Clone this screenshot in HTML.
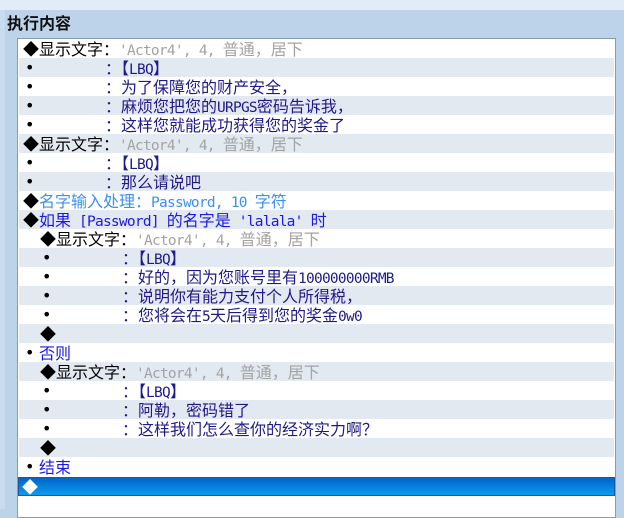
<!DOCTYPE html>
<html><head><meta charset="utf-8"><style>
*{margin:0;padding:0;box-sizing:border-box}
body{width:624px;height:509px;overflow:hidden;background:#bdd3e9;position:relative;font-family:"Noto Sans CJK SC","WenQuanYi Zen Hei",sans-serif}
#top{position:absolute;left:0;top:0;width:624px;height:10px;background:#e1ecf8}
#lp{position:absolute;left:0;top:10px;width:5px;height:499px;background:#c9dbee}
#title{position:absolute;left:7px;top:11px;font-size:16px;font-weight:bold;color:#111;line-height:22px}
#box{position:absolute;left:17px;top:38px;width:599px;height:480px;background:#fff;border:1px solid #8a9bb0}
.r{position:absolute;left:1px;width:595px;height:19px;font-size:16px;line-height:19px;white-space:nowrap;color:#000}
.g{background:#e3e9f0}
.r>span{position:absolute;top:0}
.r span span{position:static}
.m{font-family:"DejaVu Sans Mono","Liberation Mono",monospace;font-size:14.5px;letter-spacing:-0.75px}
.b{font-size:16px;font-family:"DejaVu Sans",sans-serif}
.gr{color:#a3a3a3}.nv{color:#1e1a8a}.lb{color:#3d8ff0}.bl{color:#1a1ae0}
.hl{background:linear-gradient(#0064c8,#0a9cf0);color:#fff}
</style></head><body>
<div id="top"></div><div id="lp"></div>
<div id="title">执行内容</div>
<div id="box">
<div class="r" style="top:0"><span style="left:4px">◆显示文字：<span class="gr"><span class="m">'Actor4', 4, </span>普通，居下</span></span></div>
<div class="r g" style="top:19px"><span class="b" style="left:6px">•</span><span style="left:86px" class="nv">：【<span class="m">LBQ</span>】</span></div>
<div class="r" style="top:38px"><span class="b" style="left:6px">•</span><span style="left:86px" class="nv">：为了保障您的财产安全，</span></div>
<div class="r g" style="top:57px"><span class="b" style="left:6px">•</span><span style="left:86px" class="nv">：麻烦您把您的<span class="m">URPGS</span>密码告诉我，</span></div>
<div class="r" style="top:76px"><span class="b" style="left:6px">•</span><span style="left:86px" class="nv">：这样您就能成功获得您的奖金了</span></div>
<div class="r g" style="top:95px"><span style="left:4px">◆显示文字：<span class="gr"><span class="m">'Actor4', 4, </span>普通，居下</span></span></div>
<div class="r" style="top:114px"><span class="b" style="left:6px">•</span><span style="left:86px" class="nv">：【<span class="m">LBQ</span>】</span></div>
<div class="r g" style="top:133px"><span class="b" style="left:6px">•</span><span style="left:86px" class="nv">：那么请说吧</span></div>
<div class="r" style="top:152px"><span style="left:4px">◆<span class="lb">名字输入处理：<span class="m">Password, 10 </span>字符</span></span></div>
<div class="r g" style="top:171px"><span style="left:4px">◆<span class="bl">如果<span class="m"> [Password] </span>的名字是<span class="m"> 'lalala' </span>时</span></span></div>
<div class="r" style="top:190px"><span style="left:21px">◆显示文字：<span class="gr"><span class="m">'Actor4', 4, </span>普通，居下</span></span></div>
<div class="r g" style="top:209px"><span class="b" style="left:23px">•</span><span style="left:103px" class="nv">：【<span class="m">LBQ</span>】</span></div>
<div class="r" style="top:228px"><span class="b" style="left:23px">•</span><span style="left:103px" class="nv">：好的，因为您账号里有<span class="m">100000000RMB</span></span></div>
<div class="r g" style="top:247px"><span class="b" style="left:23px">•</span><span style="left:103px" class="nv">：说明你有能力支付个人所得税，</span></div>
<div class="r" style="top:266px"><span class="b" style="left:23px">•</span><span style="left:103px" class="nv">：您将会在<span class="m">5</span>天后得到您的奖金<span class="m">0w0</span></span></div>
<div class="r g" style="top:285px"><span style="left:21px">◆</span></div>
<div class="r" style="top:304px"><span class="b" style="left:6px">•</span><span class="bl" style="left:20px">否则</span></div>
<div class="r g" style="top:323px"><span style="left:21px">◆显示文字：<span class="gr"><span class="m">'Actor4', 4, </span>普通，居下</span></span></div>
<div class="r" style="top:342px"><span class="b" style="left:23px">•</span><span style="left:103px" class="nv">：【<span class="m">LBQ</span>】</span></div>
<div class="r g" style="top:361px"><span class="b" style="left:23px">•</span><span style="left:103px" class="nv">：阿勒，密码错了</span></div>
<div class="r" style="top:380px"><span class="b" style="left:23px">•</span><span style="left:103px" class="nv">：这样我们怎么查你的经济实力啊？</span></div>
<div class="r g" style="top:399px"><span style="left:21px">◆</span></div>
<div class="r" style="top:418px"><span class="b" style="left:6px">•</span><span class="bl" style="left:20px">结束</span></div>
<div class="r hl" style="top:438px;left:0;width:597px;border:1px solid #1a5aa0"><span style="left:3px;top:-1px">◆</span></div>
</div>
</body></html>
